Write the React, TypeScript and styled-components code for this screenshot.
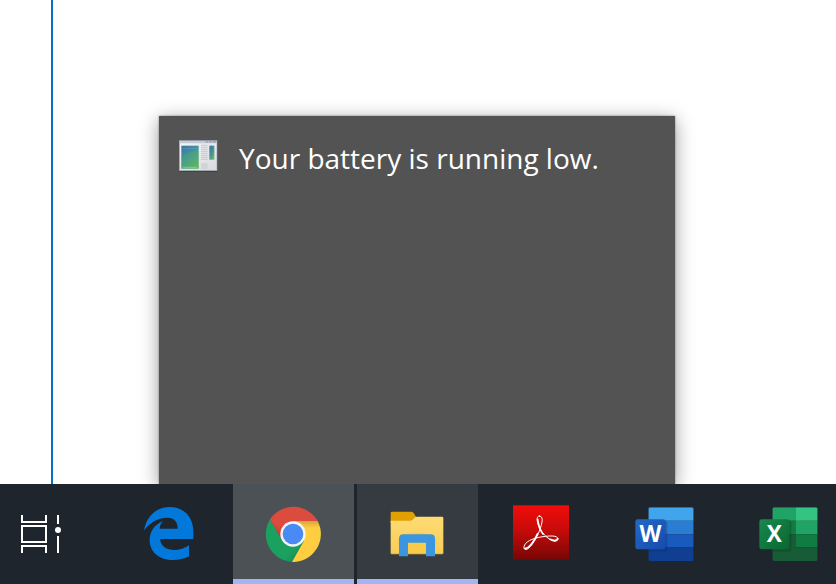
import React from "react";
import styled, { createGlobalStyle } from "styled-components";

const GlobalStyle = createGlobalStyle`
  *, *::before, *::after { box-sizing: border-box; }
  body { margin: 0; background: #fff; font-family: "Open Sans", "Noto Sans", sans-serif; }
`;

const Desktop = styled.div`
  display: flex;
  flex-direction: column;
  min-height: 100vh;
  overflow: hidden;
`;

const Workspace = styled.main`
  display: flex;
  flex: 1;
`;

const WindowEdge = styled.div`
  flex: 0 0 53px;
  border-right: 2px solid #0472c6;
`;

const ToastArea = styled.div`
  display: flex;
  flex: 1;
  padding: 116px 0 0 106px;
`;

const Toast = styled.section`
  display: flex;
  align-items: flex-start;
  gap: 21px;
  flex: 0 1 516px;
  padding: 23px 20px;
  color: #fff;
  background: #535353;
  box-shadow: 0 0 2px rgba(0, 0, 0, 0.4), 0 4px 18px rgba(0, 0, 0, 0.4);
`;

const Message = styled.p`
  margin: 0;
  font-size: 28px;
  line-height: 38px;
`;

const Taskbar = styled.nav`
  position: relative;
  display: flex;
  gap: 3px;
  height: 100px;
  background: #1e252c;
`;

const TaskButton = styled.button<{ $state?: "active" | "open"; $wide?: boolean }>`
  display: flex;
  align-items: center;
  justify-content: ${(p) => (p.$wide ? "flex-start" : "center")};
  flex: 0 0 ${(p) => (p.$wide ? 106 : 121)}px;
  padding: ${(p) => (p.$wide ? "0 0 0 21px" : "0 2px 0 0")};
  border: 0;
  background: ${(p) =>
    p.$state === "active" ? "#4b5155" : p.$state === "open" ? "#353b40" : "transparent"};
  box-shadow: ${(p) => (p.$state ? "inset 0 -5px #a2b5f0" : "none")};
`;

const Icon = styled.svg`
  display: block;
  flex: none;
`;

function AppWindowIcon() {
  return (
    <Icon width="39" height="34" viewBox="0 0 117 102" aria-hidden="true">
      <defs>
        <linearGradient id="pane" x1="0" y1="0" x2="0.7" y2="1">
          <stop offset="0" stopColor="#3b73a5" />
          <stop offset="0.5" stopColor="#4694a0" />
          <stop offset="1" stopColor="#66b568" />
        </linearGradient>
        <linearGradient id="frame" x1="0" y1="0" x2="1" y2="1">
          <stop offset="0" stopColor="#f5f7fa" />
          <stop offset="1" stopColor="#d9dadd" />
        </linearGradient>
      </defs>
      <rect x="1" y="7" width="115" height="92" fill="#3f4145" />
      <rect x="1" y="5" width="113" height="90" fill="url(#frame)" stroke="#a0a5af" strokeWidth="2" />
      <path d="M2 6H113V13H2Z" fill="#c4cad6" />
      <path d="M80 6H112V11H80Z" fill="#9da4b3" />
      <path d="M88 6V11M99 6V11" stroke="#e0e3ea" strokeWidth="2" />
      <rect x="7" y="20" width="52" height="69" fill="url(#pane)" />
      <path d="M7 52C25 40 42 38 59 40V89H7Z" fill="#4db061" opacity=".35" />
      <path d="M11 29H55" stroke="#7aabc7" strokeWidth="2" opacity=".6" />
      <path d="M11 85H55" stroke="#a1d785" strokeWidth="2" />
      <path
        d="M66 19H86M66 25H86M66 31H86M66 37H86M66 43H86M66 49H86M66 55H86M66 61H86M66 75H86M66 81H86M66 87H86"
        stroke="#bfc0c4"
        strokeWidth="2.5"
      />
      <rect x="91" y="20" width="15" height="42" fill="url(#pane)" />
      <path d="M98 20V62M91 29H106M91 38H106M91 47H106" stroke="#337985" strokeWidth="1" opacity=".6" />
    </Icon>
  );
}

function TaskViewIcon() {
  return (
    <Icon width="40" height="38" viewBox="0 0 40 38" fill="none" stroke="#fff" strokeWidth="2" aria-hidden="true">
      <path d="M1 0V7H25V0M1 11H25V27H1ZM1 38V31H25V38M37 0V9M37 21V38" />
      <circle cx="37" cy="15" r="3" fill="#fff" stroke="none" />
    </Icon>
  );
}

function EdgeIcon() {
  return (
    <Icon width="50" height="56" viewBox="42 48 150 168" aria-hidden="true">
      <path
        fill="#0279da"
        d="M42 122C49 78 80 51 119 51C165 51 190 84 190 125V147H90C92 170 112 181 136 180C152 180 166 174 177 166V199C162 207 146 210 129 210C90 210 59 188 59 150C59 124 74 104 99 93C92 101 89 110 89 116H143C143 96 134 83 112 83C82 83 56 100 42 122Z"
      />
    </Icon>
  );
}

function ChromeIcon() {
  return (
    <Icon width="56" height="56" viewBox="0 0 168 168" aria-hidden="true">
      <defs>
        <linearGradient id="redShade" x1="0" y1="1" x2="0.5" y2="0.4">
          <stop offset="0" stopColor="#a5382c" />
          <stop offset="0.6" stopColor="#db4c3f" />
        </linearGradient>
        <linearGradient id="yellowShade" x1="0" y1="0" x2="0" y2="1">
          <stop offset="0" stopColor="#d6a636" />
          <stop offset="0.17" stopColor="#ffcd40" />
        </linearGradient>
        <linearGradient id="greenShade" x1="0" y1="0" x2="1" y2="1">
          <stop offset="0.7" stopColor="#1aa15f" />
          <stop offset="1" stopColor="#12814b" />
        </linearGradient>
      </defs>
      <path d="M15 40L51 103L117 104L81 168A84 84 0 0 1 15 40Z" fill="url(#greenShade)" />
      <path d="M84 45H158A84 84 0 0 1 81 168L117 104Z" fill="url(#yellowShade)" />
      <path d="M15 40A84 84 0 0 1 158 45H84L51 103Z" fill="url(#redShade)" />
      <circle cx="84" cy="84" r="38" fill="#f4f4f4" />
      <circle cx="84" cy="84" r="31" fill="#4a8af4" />
    </Icon>
  );
}

function ExplorerIcon() {
  return (
    <Icon width="54" height="46" viewBox="120 104 162 138" aria-hidden="true">
      <defs>
        <linearGradient id="folder" x1="0" y1="0" x2="0" y2="1">
          <stop offset="0" stopColor="#ffdb72" />
          <stop offset="1" stopColor="#f8cd58" />
        </linearGradient>
        <radialGradient id="folderGlow">
          <stop offset="0" stopColor="#e8a91f" />
          <stop offset="0.65" stopColor="#edb537" stopOpacity=".6" />
          <stop offset="1" stopColor="#ffd66b" stopOpacity="0" />
        </radialGradient>
      </defs>
      <path d="M122 109Q122 106 126 106H183Q188 106 191 110L198 121V140H122Z" fill="#dfa000" />
      <path d="M122 133H180Q185 133 188 130L195 123Q197 121 201 121H276Q280 121 280 125V229Q280 233 276 233H126Q122 233 122 229Z" fill="url(#folder)" />
      <ellipse cx="201" cy="198" rx="72" ry="35" fill="url(#folderGlow)" />
      <path d="M174 199H228V233H174Z" fill="#fbca48" />
      <path d="M147 240V187Q147 174 160 174H242Q255 174 255 187V240H228V199H174V240Z" fill="#3b96df" />
      <path d="M122 231Q122 233 126 233H147M174 233H228M255 233H276Q280 233 280 229" stroke="#c79a31" strokeWidth="2" fill="none" />
    </Icon>
  );
}

function AcrobatIcon() {
  return (
    <Icon width="56" height="58" viewBox="38 44 168 174" aria-hidden="true">
      <defs>
        <linearGradient id="acrobat" x1="0" y1="0" x2="0" y2="1">
          <stop offset="0" stopColor="#f20d0a" />
          <stop offset="0.45" stopColor="#c70b0a" />
          <stop offset="1" stopColor="#760705" />
        </linearGradient>
      </defs>
      <rect x="38" y="45" width="168" height="163" fill="url(#acrobat)" />
      <g fill="none" stroke="#fff" strokeLinejoin="round" strokeLinecap="round">
        <path
          strokeWidth="3"
          d="M118 77C111 76 109 85 111 93C116 119 133 139 154 150C164 155 174 152 173 145C171 135 149 136 128 139C105 142 80 150 73 164C67 175 74 181 83 175C100 163 121 121 125 95C127 84 124 78 118 77Z"
        />
        <path strokeWidth="5" d="M74 174C85 176 102 152 112 130M149 147C160 152 169 151 172 145M112 87C114 104 119 119 128 131" />
      </g>
    </Icon>
  );
}

function WordIcon() {
  return (
    <Icon width="59" height="54" viewBox="44 50 177 162" aria-hidden="true">
      <defs>
        <clipPath id="wordSheet"><rect x="84" y="51" width="136" height="161" rx="5" /></clipPath>
        <linearGradient id="wordTile" x1="0" y1="0" x2="1" y2="1">
          <stop stopColor="#2368c4" />
          <stop offset="1" stopColor="#164bad" />
        </linearGradient>
      </defs>
      <g clipPath="url(#wordSheet)">
        <path fill="#41a5ee" d="M84 51H220V91H84Z" />
        <path fill="#2b7cd3" d="M84 91H220V132H84Z" />
        <path fill="#185abd" d="M84 132H220V171H84Z" />
        <path fill="#103f91" d="M84 171H220V212H84Z" />
        <rect x="50" y="91" width="91" height="93" rx="7" fill="#082d6c" opacity=".3" />
      </g>
      <rect x="45" y="87" width="90" height="90" rx="7" fill="url(#wordTile)" />
      <text x="90" y="156" fill="#fff" fontFamily="Open Sans, sans-serif" fontSize="68" fontWeight="700" textAnchor="middle">W</text>
    </Icon>
  );
}

function ExcelIcon() {
  return (
    <Icon width="59" height="54" viewBox="38 50 177 162" aria-hidden="true">
      <defs>
        <clipPath id="excelSheet"><rect x="78" y="51" width="136" height="161" rx="5" /></clipPath>
        <linearGradient id="excelTile" x1="0" y1="0" x2="1" y2="1">
          <stop stopColor="#18884f" />
          <stop offset="1" stopColor="#0b6631" />
        </linearGradient>
      </defs>
      <g clipPath="url(#excelSheet)">
        <path fill="#21a366" d="M78 51H147V91H78ZM147 91H214V132H147Z" />
        <path fill="#33c481" d="M147 51H214V91H147Z" />
        <path fill="#107c41" d="M78 91H147V132H78ZM147 132H214V171H147Z" />
        <path fill="#185c37" d="M78 132H147V171H214V212H78Z" />
        <rect x="44" y="91" width="91" height="93" rx="7" fill="#063b1d" opacity=".3" />
      </g>
      <rect x="39" y="87" width="90" height="90" rx="7" fill="url(#excelTile)" />
      <text x="84" y="156" fill="#fff" fontFamily="Open Sans, sans-serif" fontSize="68" fontWeight="700" textAnchor="middle">X</text>
    </Icon>
  );
}

export default function App() {
  return (
    <Desktop>
      <GlobalStyle />
      <Workspace>
        <WindowEdge />
        <ToastArea>
          <Toast role="status">
            <AppWindowIcon />
            <Message>Your battery is running low.</Message>
          </Toast>
        </ToastArea>
      </Workspace>
      <Taskbar aria-label="Taskbar">
        <TaskButton $wide aria-label="Task View"><TaskViewIcon /></TaskButton>
        <TaskButton aria-label="Microsoft Edge"><EdgeIcon /></TaskButton>
        <TaskButton $state="active" aria-label="Google Chrome"><ChromeIcon /></TaskButton>
        <TaskButton $state="open" aria-label="File Explorer"><ExplorerIcon /></TaskButton>
        <TaskButton aria-label="Adobe Acrobat"><AcrobatIcon /></TaskButton>
        <TaskButton aria-label="Word"><WordIcon /></TaskButton>
        <TaskButton aria-label="Excel"><ExcelIcon /></TaskButton>
      </Taskbar>
    </Desktop>
  );
}
